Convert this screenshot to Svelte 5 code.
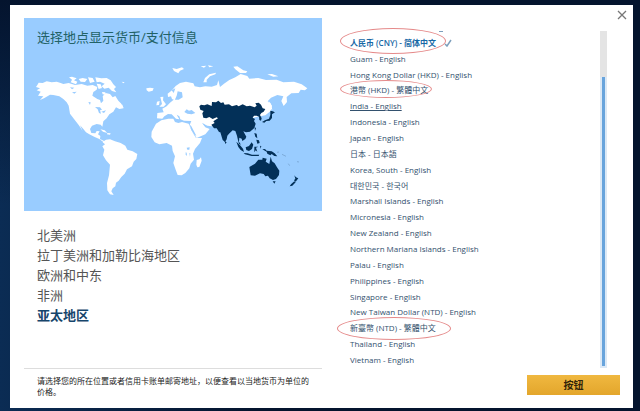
<script>
  let region = $state('亚太地区');
  const regions = ['北美洲', '拉丁美洲和加勒比海地区', '欧洲和中东', '非洲', '亚太地区'];
  const locales = [
    { name: '人民币 (CNY) - 简体中文', current: true, ring: 'cny' },
    { name: 'Guam - English' },
    { name: 'Hong Kong Dollar (HKD) - English' },
    { name: '港幣 (HKD) - 繁體中文', ring: 'hkd' },
    { name: 'India - English', hover: true },
    { name: 'Indonesia - English' },
    { name: 'Japan - English' },
    { name: '日本 - 日本語' },
    { name: 'Korea, South - English' },
    { name: '대한민국 - 한국어' },
    { name: 'Marshall Islands - English' },
    { name: 'Micronesia - English' },
    { name: 'New Zealand - English' },
    { name: 'Northern Mariana Islands - English' },
    { name: 'Palau - English' },
    { name: 'Philippines - English' },
    { name: 'Singapore - English' },
    { name: 'New Taiwan Dollar (NTD) - English' },
    { name: '新臺幣 (NTD) - 繁體中文', ring: 'ntd' },
    { name: 'Thailand - English' },
    { name: 'Vietnam - English' }
  ];
</script>

<main>
  <div class="dialog" role="dialog" aria-labelledby="title">
    <button class="close" aria-label="关闭">
      <svg viewBox="0 0 10 10"><path d="M1 1 9 9M9 1 1 9" /></svg>
    </button>

    <div class="body">
      <section class="left">
        <div class="map">
          <h1 id="title">选择地点显示货币/支付信息</h1>
          <svg viewBox="72 160 894 473" aria-hidden="true">
            <g class="land">
              <path d="M108 262 112 256 116 249 128 250 140 245 155 248 170 246 182 250 190 253 206 250 225 256 245 253 262 258 278 256 292 262 290 270 280 277 277 288 292 298 300 301 303 311 310 303 308 290 317 280 330 283 338 293 346 289 355 303 364 312 358 318 370 326 358 328 348 323 340 336 328 344 320 356 310 365 307 381 302 375 290 373 276 378 270 388 274 400 286 401 290 394 299 395 294 404 301 409 300 418 312 424 319 422 314 430 298 418 284 412 268 404 258 398 250 388 240 377 248 394 236 376 222 358 210 342 206 318 200 308 190 298 178 290 160 286 150 285 132 296 120 301 130 290 114 288 122 276 110 272 120 266Z" />
              <path d="M207 233 216 231 230 236 222 242 232 246 228 254 212 248 216 240ZM236 238 248 235 262 238 255 247 242 246ZM264 233 278 235 284 246 270 250ZM286 233 304 236 320 235 332 242 340 254 348 262 342 268 349 278 336 274 326 264 313 267 305 260 314 252 300 246 290 248ZM290 252 302 254 306 265 296 268ZM306 277 316 278 316 285 308 284ZM357 309 367 315 371 326 358 322ZM301 389 314 392 322 400 309 396ZM322 400 332 401 330 405 321 404ZM365 246 374 248 370 251Z" />
              <path d="M308 428 318 420 330 419 345 425 362 430 376 438 382 450 398 455 412 463 409 478 401 486 396 500 381 509 374 522 364 532 356 543 348 549 346 560 338 566 334 575 341 586 330 584 322 572 321 550 327 527 330 495 318 482 309 467 313 450 307 440 315 434Z" />
              <path d="M468 372 484 362 505 357 520 357 525 367 535 370 546 367 566 372 573 389 582 405 588 415 606 415 600 430 585 448 579 462 582 480 572 492 568 506 556 520 545 527 533 526 527 510 520 490 525 470 518 454 516 438 500 430 478 434 464 428 454 412 455 396Z" />
              <path d="M590 481 598 479 603 473 605 483 598 502 592 503 589 495Z" />
              <path d="M471 356 472 340 491 338 487 327 500 320 510 309 521 300 536 300 548 293 546 278 533 275 530 288 524 302 516 298 513 290 504 292 503 282 516 272 527 259 540 250 558 246 580 251 584 260 600 263 616 260 635 261 651 256 655 242 660 262 672 252 688 241 706 233 722 223 742 229 748 237 775 235 798 241 830 240 850 248 882 246 905 254 922 266 915 272 902 270 896 280 874 281 860 292 861 307 851 319 844 304 850 290 832 286 813 294 803 305 816 318 812 334 796 347 780 350 650 378 636 380 622 378 606 370 616 383 629 388 616 404 590 415 580 400 568 378 574 364 552 363 541 359 538 350 530 345 538 359 528 357 515 344 504 343 493 350 487 357Z" />
              <path d="M481 292 490 291 489 302 498 314 491 321 478 321 486 313ZM471 306 479 304 477 316 469 317ZM439 266 450 264 461 266 458 273 446 276 440 272ZM517 205 530 208 546 203 552 208 540 213 535 221 522 214ZM610 248 615 235 628 224 648 219 646 224 630 230 620 240 620 248ZM700 201 712 200 730 212 742 215 738 220 720 220 706 209ZM602 200 619 198 612 204ZM624 197 640 200 628 203ZM802 224 816 223 835 230 820 231ZM806 305 813 312 817 331 808 324Z" />
            </g>
            <g class="water">
              <path d="M553 337 560 329 567 333 575 331 586 340 575 344 562 342ZM568 374 574 380 589 408 584 407 574 391ZM608 370 621 381 634 382 632 386 617 382ZM515 272 526 266 521 280ZM285 322 300 323 306 330 300 332 303 342 297 340 293 329ZM304 336 318 332 312 340ZM210 263 223 264 216 269ZM216 278 230 276 223 282ZM265 307 272 308 270 316ZM560 444 569 443 568 450 562 450ZM557 458 560 459 561 468 557 466ZM568 460 571 461 570 471Z" />
            </g>
            <g class="active" transform="translate(480 180)">
              <path d="M118 140 123 135 133 137 142 134 155 139 156 127 168 128 175 123 183 130 190 128 194 135 207 134 216 140 230 136 236 140 248 134 260 140 270 138 284 143 290 138 286 131 296 129 303 135 308 146 316 148 311 156 304 160 300 166 305 176 303 183 298 181 297 171 290 168 282 168 278 174 285 178 282 184 287 192 283 205 270 216 258 218 250 215 259 231 256 238 247 244 245 237 238 234 237 246 243 255 237 252 234 242 231 228 226 214 218 212 207 222 202 228 200 239 195 247 188 241 181 218 177 217 170 206 162 206 154 195 164 190 160 185 174 176 170 173 158 178 148 172 139 176 130 174 127 161 131 154 121 150Z" />
              <path d="M331 153 338 155 345 158 336 164 336 175 329 183 319 184 313 189 306 187 315 182 327 177 331 166ZM194 244 200 248 196 253ZM284 203 288 205 285 214ZM283 220 290 222 292 236 286 231ZM289 240 297 242 299 250 292 252ZM229 246 239 255 249 267 252 277 242 271 235 262ZM251 280 263 281 276 285 298 285 296 289 275 289 255 284ZM257 263 267 259 275 248 280 255 276 268 267 274 259 271ZM283 261 295 261 288 264 292 276 287 272 283 278ZM300 258 304 260 302 267ZM307 269 315 268 320 273 335 275 344 281 352 290 343 289 335 283 331 287 322 282 320 276Z" />
              <path d="M268 322 285 312 295 300 307 300 308 294 320 297 317 306 328 313 332 291 336 305 344 311 351 323 358 333 357 346 348 358 339 361 329 356 324 348 316 350 311 343 300 341 285 348 272 347ZM338 365 347 365 343 372ZM403 347 408 353 415 356 407 366 402 362 406 357ZM403 365 407 368 397 378 389 380 393 374Z" />
              <path class="islets" d="M351 278 357 277M366 284 378 290M385 312 389 318M411 306 417 307" />
            </g>
          </svg>
        </div>

        <ul class="regions">
          {#each regions as name}
            <li><button class:active={name === region} onclick={() => (region = name)}>{name}</button></li>
          {/each}
        </ul>
      </section>

      <section class="right">
        <ul class="locales">
          {#each locales as item}
            <li>
              <a href="#locale" class:current={item.current} class:hover={item.hover}>{item.name}</a>
              {#if item.current}
                <svg class="tick" viewBox="0 0 8 8" aria-hidden="true"><path d="M1 5 3 7 7 1" /></svg>
              {/if}
              {#if item.ring}<span class="ring {item.ring}"></span>{/if}
            </li>
          {/each}
        </ul>
        <div class="scrollbar"><div class="thumb"></div></div>
      </section>
    </div>

    <footer>
      <p>请选择您的所在位置或者信用卡账单邮寄地址，以便查看以当地货币为单位的价格。</p>
      <button class="submit">按钮</button>
    </footer>
  </div>
</main>

<style>
  :global(body) {
    margin: 0;
    background: #04142e;
  }
  main {
    box-sizing: border-box;
    min-height: 100vh;
    padding: 5px 7px 3px 10px;
    background:
      linear-gradient(#04142e, transparent 50%),
      linear-gradient(90deg, #0b2c54, #04142e 40%);
    font-family: 'Open Sans', 'Noto Sans CJK SC', sans-serif;
  }
  .dialog {
    position: relative;
    box-sizing: border-box;
    padding: 13px 13px 0 14px;
    min-height: calc(100vh - 8px);
    background: #fff;
  }
  button {
    padding: 0;
    border: 0;
    background: none;
    font-family: inherit;
    cursor: pointer;
  }
  ul {
    margin: 0;
    padding: 0;
    list-style: none;
  }
  .close {
    position: absolute;
    top: 5px;
    right: 6px;
    width: 10px;
    height: 10px;
  }
  .close svg {
    display: block;
    fill: none;
    stroke: #777;
    stroke-width: 1.3;
  }
  .body,
  footer {
    display: grid;
    grid-template-columns: 1fr 1fr;
  }
  .map {
    padding-top: 9px;
    background: #99ccff;
  }
  .map svg {
    display: block;
    width: 100%;
  }
  h1 {
    margin: 0 0 6px 13px;
    font-size: 13px;
    line-height: 20px;
    font-weight: 400;
    color: #226266;
  }
  .land {
    fill: #fff;
  }
  .water {
    fill: #99ccff;
  }
  .active {
    fill: #033058;
  }
  .islets {
    stroke: #6e9ac6;
    stroke-width: 2;
  }
  .regions {
    padding: 14px 0 0 13px;
  }
  .regions button {
    display: block;
    font-size: 13px;
    line-height: 20px;
    color: #555;
  }
  .regions button.active {
    font-weight: 700;
    color: #17456b;
  }
  .right {
    display: flex;
    justify-content: space-between;
    padding: 13px 13px 0 28px;
  }
  .locales {
    display: grid;
    grid-template-rows: repeat(21, 1fr);
    height: 333px;
    margin-top: 4px;
  }
  .locales li {
    position: relative;
    display: flex;
    align-items: center;
    gap: 8px;
  }
  .locales li:first-child::before {
    content: '';
    position: absolute;
    top: -4px;
    left: 89px;
    width: 4px;
    height: 1px;
    background: #7c9fbc;
  }
  .locales a {
    font-size: 8px;
    line-height: 12px;
    color: #33516e;
    text-decoration: none;
    white-space: nowrap;
  }
  .locales .current {
    font-weight: 600;
    color: #1768a5;
  }
  .locales .hover {
    text-decoration: underline;
  }
  .tick {
    width: 8px;
    fill: none;
    stroke: #7c9fbc;
    stroke-width: 1.5;
  }
  .ring {
    position: absolute;
    top: -3px;
    left: -10px;
    box-sizing: border-box;
    border: 1px solid #e58a8a;
    border-radius: 50%;
    pointer-events: none;
  }
  .cny {
    top: -7px;
    width: 106px;
    height: 26px;
  }
  .hkd {
    width: 92px;
    height: 18px;
  }
  .ntd {
    left: -13px;
    width: 114px;
    height: 23px;
  }
  .scrollbar {
    box-sizing: border-box;
    width: 7px;
    height: 337px;
    padding: 46px 2px 2px;
    background: linear-gradient(#e4e4e4 46px, #dce9f6 46px);
  }
  .thumb {
    height: 100%;
    background: #68a4dc;
  }
  footer {
    align-items: start;
  }
  footer p {
    margin: 0;
    padding: 6px 13px 0;
    border-top: 1px solid #ddd;
    font-size: 8px;
    line-height: 11px;
    color: #222;
  }
  .submit {
    justify-self: end;
    width: 93px;
    height: 20px;
    margin-top: 7px;
    background: linear-gradient(#f0b840, #e3a62c);
    font-size: 10px;
    line-height: 20px;
    font-weight: 700;
    color: #33250a;
  }
</style>
